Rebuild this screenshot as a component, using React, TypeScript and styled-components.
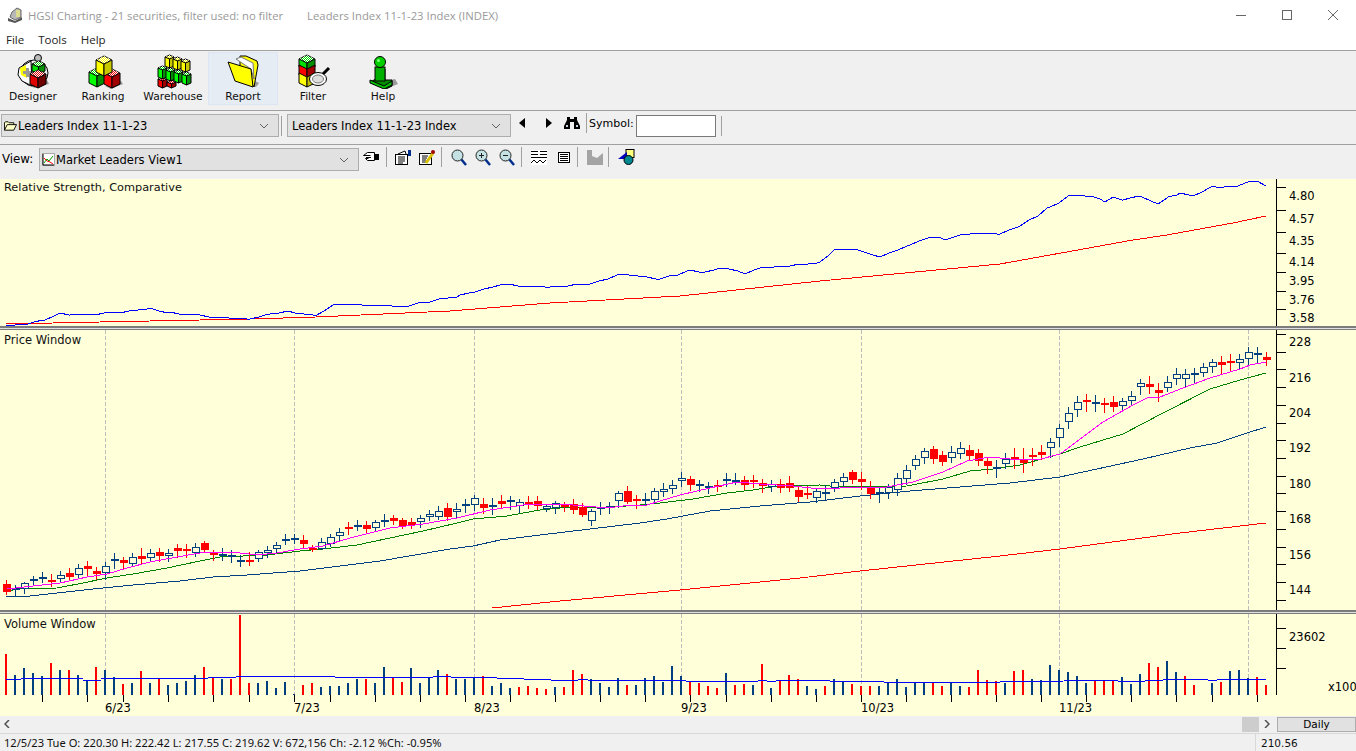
import React from 'react';
import styled, { createGlobalStyle } from 'styled-components';

const GlobalStyle = createGlobalStyle`
  html, body { margin: 0; padding: 0; background: #f0f0f0; overflow: hidden; }
  * { box-sizing: border-box; }
`;

const UI_FONT = `"DejaVu Sans", "Liberation Sans", sans-serif`;
const TITLE_FONT = `"Open Sans", "Noto Sans", sans-serif`;
const STATUS_FONT = `"Noto Sans", "DejaVu Sans", sans-serif`;
const CREAM = '#ffffd9';
const NAVY = '#004080';

type Kind = 'r' | 'h' | 'd';
type Row = [number, number, number, number, Kind];

// candles were read off the chart, values are y offsets at 3x
const toCandles = (y0: number, rows: Row[]) =>
  rows.map(([t, b, hi, lo, k]) => ({
    top: y0 + t / 3,
    bot: y0 + b / 3,
    hi: y0 + hi / 3,
    lo: y0 + lo / 3,
    k,
  }));

const candles = [
  ...toCandles(500, [
    [252, 275, 240, 285, 'r'], [265, 270, 255, 288, 'd'], [250, 268, 245, 282, 'h'], [238, 241, 228, 258, 'd'],
    [231, 236, 216, 250, 'd'], [240, 245, 222, 260, 'r'], [226, 236, 212, 245, 'h'], [219, 231, 205, 245, 'r'],
    [205, 224, 192, 237, 'h'], [198, 206, 183, 228, 'r'], [213, 221, 200, 240, 'r'], [198, 220, 185, 238, 'h'],
    [177, 182, 158, 205, 'd'], [180, 188, 170, 210, 'r'], [172, 191, 158, 198, 'h'], [168, 177, 144, 195, 'r'],
    [160, 173, 148, 187, 'h'], [156, 167, 144, 185, 'r'], [160, 167, 148, 186, 'h'], [144, 153, 131, 172, 'r'],
    [147, 153, 131, 172, 'r'], [142, 160, 128, 170, 'h'], [129, 150, 123, 160, 'r'], [157, 164, 150, 182, 'r'],
    [162, 167, 145, 185, 'd'], [166, 172, 150, 190, 'd'], [181, 186, 165, 200, 'd'], [180, 186, 157, 198, 'r'],
    [157, 176, 150, 187, 'h'], [151, 160, 137, 172, 'h'], [135, 146, 125, 160, 'h'], [118, 122, 102, 134, 'd'],
  ]),
  ...toCandles(460, [
    [235, 238, 222, 252, 'd'], [240, 252, 225, 268, 'r'], [264, 270, 255, 276, 'r'], [247, 268, 235, 272, 'h'],
    [232, 252, 222, 262, 'h'], [217, 227, 205, 243, 'h'], [202, 207, 186, 225, 'r'], [195, 200, 181, 215, 'd'],
    [195, 207, 183, 222, 'r'], [187, 205, 181, 218, 'h'], [180, 185, 163, 203, 'd'], [174, 183, 165, 195, 'r'],
    [180, 198, 174, 208, 'r'], [186, 195, 174, 208, 'r'], [175, 186, 165, 203, 'h'], [163, 170, 151, 183, 'h'],
    [154, 170, 139, 182, 'h'], [144, 171, 129, 183, 'r'], [148, 157, 129, 178, 'h'], [132, 136, 117, 158, 'd'],
    [115, 136, 105, 153, 'h'], [132, 144, 114, 163, 'r'], [135, 139, 114, 165, 'd'], [123, 132, 105, 147, 'r'],
    [121, 127, 108, 151, 'h'], [127, 138, 117, 160, 'h'], [127, 133, 108, 147, 'r'], [123, 137, 108, 150, 'r'],
    [139, 146, 133, 157, 'h'], [130, 144, 124, 162, 'h'], [135, 139, 126, 157, 'r'], [132, 150, 117, 162, 'r'],
    [141, 165, 129, 172, 'r'], [154, 184, 147, 198, 'h'], [141, 146, 127, 166, 'd'], [138, 142, 126, 162, 'd'],
    [100, 124, 94, 144, 'h'], [93, 126, 78, 132, 'r'], [117, 123, 105, 147, 'r'], [117, 123, 99, 135, 'd'],
    [94, 120, 84, 132, 'h'],
  ]),
  ...toCandles(430, [
    [178, 187, 159, 200, 'h'], [166, 176, 150, 192, 'h'], [145, 152, 126, 172, 'h'], [148, 165, 138, 183, 'r'],
    [162, 167, 150, 185, 'd'], [167, 175, 156, 192, 'h'], [165, 172, 150, 186, 'r'], [147, 152, 129, 172, 'd'],
    [150, 153, 129, 165, 'd'], [151, 165, 138, 180, 'r'], [150, 157, 135, 175, 'r'], [160, 167, 147, 189, 'r'],
    [162, 171, 150, 186, 'h'], [162, 173, 147, 189, 'r'], [160, 174, 138, 186, 'r'], [180, 200, 171, 215, 'r'],
    [188, 192, 168, 207, 'r'], [184, 204, 177, 219, 'h'], [186, 191, 165, 210, 'd'], [157, 174, 147, 186, 'h'],
    [142, 155, 129, 168, 'h'], [126, 150, 120, 162, 'r'], [147, 156, 126, 180, 'r'], [172, 192, 153, 207, 'r'],
    [186, 191, 172, 219, 'd'], [171, 189, 162, 207, 'h'], [145, 181, 129, 198, 'h'], [121, 147, 105, 165, 'h'],
    [88, 109, 75, 120, 'h'], [64, 85, 54, 102, 'h'], [57, 87, 48, 102, 'r'], [75, 96, 63, 108, 'r'],
    [67, 85, 48, 99, 'h'], [55, 73, 36, 87, 'h'], [60, 78, 45, 90, 'r'], [69, 93, 57, 108, 'r'],
    [93, 108, 84, 132, 'r'], [111, 116, 90, 144, 'd'], [87, 103, 70, 117, 'h'], [81, 90, 54, 117, 'r'],
    [87, 99, 54, 129, 'r'], [76, 80, 54, 108, 'r'],
  ]),
  ...toCandles(330, [
    [367, 375, 345, 390, 'r'], [335, 355, 325, 385, 'h'], [295, 325, 282, 350, 'h'], [250, 275, 232, 298, 'h'],
    [217, 241, 198, 260, 'h'], [211, 215, 192, 245, 'r'], [216, 219, 196, 248, 'd'], [219, 226, 205, 250, 'r'],
    [217, 230, 199, 248, 'r'], [212, 227, 205, 245, 'h'], [199, 214, 184, 228, 'h'], [160, 172, 148, 195, 'h'],
    [163, 172, 139, 192, 'r'], [181, 188, 160, 218, 'r'], [157, 175, 139, 187, 'h'], [133, 148, 114, 165, 'h'],
    [133, 148, 117, 175, 'h'], [130, 132, 115, 160, 'd'], [112, 130, 100, 142, 'h'], [97, 112, 87, 130, 'h'],
    [97, 106, 78, 133, 'r'], [94, 98, 72, 127, 'r'], [88, 100, 72, 118, 'h'], [65, 88, 52, 105, 'h'],
    [70, 73, 52, 100, 'd'], [81, 89, 66, 107, 'r'],
  ]),
];

const pts = (list: number[][]) => list.map((p) => p.join(',')).join(' ');

// sample a hand-read line once per bar and give it the small daily wobble the real series has
const wobble = (list: number[][], amp: number) => {
  const out: number[][] = [];
  for (let s = 0; s < list.length - 1; s++) {
    const [x0, y0] = list[s];
    const [x1, y1] = list[s + 1];
    for (let x = x0; x < x1; x += 9) {
      const y = y0 + ((y1 - y0) * (x - x0)) / (x1 - x0);
      out.push([x, Math.round(y + amp * Math.sin(x * 0.41) * Math.cos(x * 0.13))]);
    }
  }
  out.push(list[list.length - 1]);
  return pts(out);
};

const MAGENTA_LINE = pts([[7,589],[33,586],[60,583],[87,577],[107,574],[127,568],[150,562],[177,557],[200,553],[213,552],[240,553],[257,555],[277,553],[300,549],[323,546],[350,538],[390,528],[423,524],[457,518],[490,510],[530,504],[557,504],[573,505],[607,508],[623,506],[647,505],[660,501],[680,495],[710,488],[737,482],[760,484],[793,486],[820,489],[860,487],[887,487],[913,482],[943,472],[967,461],[990,457],[1010,459],[1037,460],[1060,454],[1083,437],[1103,422],[1133,405],[1147,398],[1160,397],[1183,388],[1210,378],[1240,369],[1250,365],[1266,362]]);
const GREEN_LINE = pts([[6,591],[20,589],[57,588],[83,583],[107,578],[133,574],[167,568],[200,561],[220,557],[267,555],[300,551],[323,549],[357,545],[390,538],[423,531],[457,523],[473,519],[507,516],[540,510],[570,507],[613,507],[640,505],[660,503],[693,499],[727,493],[753,490],[777,486],[820,485],[840,487],[907,486],[943,479],[970,471],[993,469],[1020,465],[1060,454],[1080,447],[1123,434],[1163,413],[1210,389],[1240,380],[1266,373]]);
const NAVY_LINE = pts([[6,596],[30,596],[57,593],[93,589],[133,585],[180,581],[213,577],[247,575],[300,571],[380,561],[450,549],[473,546],[500,540],[540,535],[590,529],[640,523],[667,519],[710,511],[760,506],[810,502],[860,496],[910,491],[960,487],[1010,483],[1060,477],[1143,459],[1190,448],[1217,443],[1247,433],[1266,427]]);
const LONG_RED_LINE = pts([[492,608],[560,601],[680,590],[800,578],[860,571],[1000,556],[1060,549],[1180,533],[1266,523]]);
const RS_BLUE = wobble([[6,325],[25,324],[45,320],[60,313],[70,315],[95,314],[120,312],[150,309],[170,313],[200,315],[220,318],[250,319],[270,313],[295,312],[315,316],[335,305],[365,304],[400,307],[430,302],[460,295],[475,292],[500,285],[550,287],[590,284],[620,274],[660,279],[690,270],[705,272],[720,268],[745,273],[765,267],[790,266],[820,262],[835,249],[855,249],[880,257],[910,245],[930,237],[945,239],[970,233],[1000,234],[1020,226],[1050,207],[1070,196],[1085,195],[1100,199],[1105,202],[1113,198],[1123,200],[1130,197],[1142,197],[1158,204],[1168,197],[1180,193],[1193,196],[1212,186],[1220,188],[1240,185],[1248,182],[1257,181],[1266,186]], 1);
const RS_RED = pts([[6,324],[100,322],[250,319],[316,317],[450,311],[550,303],[680,296],[820,281],[1000,264],[1050,255],[1100,246],[1133,240],[1167,235],[1200,229],[1233,223],[1266,216]]);

// height above the baseline, R = red, B = blue
const VOLUME = 'R41 B20 B27 B22 B19 R32 B25 R25 B20 B15 R28 B25 B18 R11 B12 R24 B12 R17 B10 B12 B14 B20 R28 R18 B16 R16 R80 R12 B12 B14 B7 B13 B1 R10 R12 B8 B9 B9 B12 B16 R16 B12 B28 R17 R13 B27 B12 B17 B25 R21 B16 B16 B18 R19 B9 B12 B7 R8 R9 R7 R6 B8 R8 R25 R21 B16 B12 B8 B17 R10 B10 B17 B19 B13 B29 B19 R14 R12 R9 R7 B22 R10 R11 B10 R31 B7 R14 R20 R16 B9 B6 R9 B16 B14 R11 R9 R9 B9 B12 B16 B8 B12 B12 R13 R9 B13 B9 R8 R25 R15 R14 B12 R24 R25 B16 B15 B30 B25 B23 B19 B12 R14 R14 R14 B18 B11 B21 R32 R28 B34 B23 R19 R10 B0 B12 R13 B24 B25 B17 R18 R10'
  .split(' ')
  .map((v) => ({ red: v[0] === 'R', h: Number(v.slice(1)) }));

const VOL_AVG: [number, number, number][] = [
  [6,21,679],[21,83,678],[83,101,680],[101,208,678],[208,236,677],[236,335,676],[335,433,677],[433,451,676],[451,497,677],[497,524,678],[524,551,679],[551,578,680],[578,588,679],[588,686,680],[686,758,681],[758,767,680],[767,776,681],[776,830,680],[830,884,681],[884,1000,682],[1000,1063,681],[1064,1118,680],[1118,1145,681],[1145,1163,680],[1163,1208,679],[1208,1217,680],[1217,1266,679],
];

const GRIDLINES = [105, 294, 474, 681, 861, 1059, 1248];
const MONTHS: [number, string][] = [[105,'6/23'],[294,'7/23'],[474,'8/23'],[681,'9/23'],[861,'10/23'],[1059,'11/23']];
const VOL_TICKS = [42,87,123,168,213,249,294,330,375,420,465,510,555,600,645,690,726,771,816,861,906,951,996,1041,1086,1131,1176,1212,1257];
const RS_AXIS: [number, string][] = [[187,'4.80'],[210,'4.57'],[232,'4.35'],[253,'4.14'],[272,'3.95'],[291,'3.76'],[309,'3.58']];
const PRICE_LABELS: [number, string][] = [[334,'228'],[370,'216'],[405,'204'],[440,'192'],[476,'180'],[511,'168'],[547,'156'],[582,'144']];
const PRICE_TICKS = Array.from({ length: 16 }, (_, i) => Math.round(334 + i * 17.72));

const Page = styled.div`
  width: 1356px;
  height: 751px;
  display: flex;
  flex-direction: column;
  background: #f0f0f0;
  overflow: hidden;
  font-family: ${UI_FONT};
  font-size: 11px;
  color: #000;
`;

const TitleBar = styled.div`
  height: 30px;
  display: flex;
  align-items: center;
  background: #fff;
  padding-left: 7px;
  flex: none;
`;

const TitleText = styled.span<{ $ml: number }>`
  margin-left: ${(p) => p.$ml}px;
  font-family: ${TITLE_FONT};
  font-size: 11.3px;
  color: #999;
  white-space: nowrap;
`;

const WindowControls = styled.div`
  margin-left: auto;
  display: flex;
`;

const WindowButton = styled.div`
  width: 46px;
  height: 30px;
  display: flex;
  align-items: center;
  justify-content: center;
`;

const MenuBar = styled.div`
  height: 21px;
  flex: none;
  display: flex;
  gap: 14px;
  padding-left: 6px;
  align-items: center;
  background: #fff;
  border-bottom: 1px solid #a0a0a0;
  padding-bottom: 2px;
`;

const MenuItem = styled.span`
  font-family: ${TITLE_FONT};
  font-size: 11.5px;
  color: #222;
`;

const ToolBar = styled.div`
  height: 60px;
  flex: none;
  display: flex;
  margin-left: -2px;
  padding-top: 1px;
  border-bottom: 1px solid #a0a0a0;
`;

const ToolButton = styled.div<{ $active?: boolean }>`
  width: 70px;
  height: 53px;
  display: flex;
  flex-direction: column;
  align-items: center;
  background: ${(p) => (p.$active ? '#e6ecf3' : 'transparent')};
  border: 1px solid ${(p) => (p.$active ? '#dbe6f2' : 'transparent')};
`;

const ToolLabel = styled.span`
  font-size: 10.7px;
  line-height: 13px;
  margin-top: 1px;
  color: #111;
`;

const ComboRow = styled.div`
  height: 34px;
  flex: none;
  display: flex;
  align-items: center;
  border-bottom: 1px solid #a0a0a0;
  padding: 0 0 4px 1px;
`;

const ViewRow = styled.div`
  height: 34px;
  flex: none;
  display: flex;
  align-items: center;
  padding-bottom: 5px;
`;

const Combo = styled.div<{ $w: number; $ml?: number }>`
  width: ${(p) => p.$w}px;
  height: 23px;
  margin-left: ${(p) => p.$ml ?? 0}px;
  display: flex;
  align-items: center;
  gap: 1px;
  padding: 0 6px 0 2px;
  background: #e1e1e1;
  border: 1px solid #adadad;
  font-size: 11.5px;
  white-space: nowrap;
`;

const ComboText = styled.span<{ $pl?: number }>`
  padding-left: ${(p) => p.$pl ?? 0}px;
  flex: 1;
`;

const VSep = styled.div<{ $ml: number }>`
  width: 1px;
  height: 20px;
  background: #a0a0a0;
  margin-left: ${(p) => p.$ml}px;
  flex: none;
`;

const RowLabel = styled.span<{ $ml: number }>`
  margin-left: ${(p) => p.$ml}px;
  font-size: 11px;
  white-space: nowrap;
`;

const ViewLabel = styled(RowLabel)`
  width: 37px;
  flex: none;
  margin-bottom: 2px;
  font-size: 11.8px;
`;

// buttons on these bars sit a little above the combo boxes
const IconStrip = styled.div`
  display: flex;
  align-items: center;
  flex: none;
  margin-bottom: 5px;
`;

const SymbolInput = styled.div`
  width: 80px;
  height: 22px;
  margin-left: 2px;
  background: #fff;
  border: 1px solid #7a7a7a;
  flex: none;
`;

const Icon = styled.svg<{ $ml?: number }>`
  display: block;
  flex: none;
  margin-left: ${(p) => p.$ml ?? 0}px;
`;

const ChartArea = styled.div`
  flex: none;
  display: flex;
  flex-direction: column;
  background: ${CREAM};
`;

const Panel = styled.div<{ $h: number }>`
  position: relative;
  height: ${(p) => p.$h}px;
  flex: none;
`;

const PanelTitle = styled.span<{ $top?: number; $size?: number }>`
  position: absolute;
  left: 4px;
  top: ${(p) => p.$top ?? 3}px;
  font-size: ${(p) => p.$size ?? 11.5}px;
  color: #111;
`;

const PanelSvg = styled.svg`
  display: block;
  width: 1356px;
  height: 100%;
`;

const AxisText = styled.text`
  font-family: ${UI_FONT};
  font-size: 11.5px;
  fill: #000;
`;

const Splitter = styled.div`
  height: 4px;
  flex: none;
  background: #e0e0e0;
  border-top: 2px solid #7c7c7c;
  border-bottom: 1px solid #7c7c7c;
`;

const ScrollRow = styled.div`
  height: 16px;
  flex: none;
  display: flex;
  align-items: center;
  background: #f0f0f0;
`;

const ScrollTrack = styled.div`
  width: 1276px;
  height: 16px;
  display: flex;
  align-items: center;
  padding: 0 6px 0 4px;
`;

const ScrollThumb = styled.div`
  width: 17px;
  height: 15px;
  margin-left: auto;
  margin-right: 5px;
  background: #cdcdcd;
`;

const DailyButton = styled.div`
  width: 79px;
  height: 15px;
  margin-left: 1px;
  background: #e1e1e1;
  border: 1px solid #adadad;
  font-size: 10.5px;
  line-height: 13px;
  text-align: center;
`;

const StatusBar = styled.div`
  flex: 1;
  display: flex;
  align-items: center;
  margin-top: 1px;
  border-top: 1px solid #d8d8d8;
  padding-left: 4px;
  white-space: nowrap;
  font-family: ${STATUS_FONT};
  font-size: 11.13px;
  color: #111;
`;

const StatusCell = styled.div`
  margin-left: auto;
  width: 101px;
  height: 100%;
  display: flex;
  align-items: center;
  padding-left: 5px;
  border-left: 1px solid #d8d8d8;
  font-family: ${UI_FONT};
  font-size: 10.5px;
`;

const Cube = ({ x, y, w = 16, h = 18, c, d, id }: { x: number; y: number; w?: number; h?: number; c: string; d: string; id: string }) => {
  const m = w / 2;
  const t = Math.round(w / 4);
  return (
    <g transform={`translate(${x} ${y})`} stroke="#000" strokeWidth="1">
      <polygon points={`0,${t} ${m},0 ${w},${t} ${m},${t * 2}`} fill={c} />
      <polygon points={`0,${t} ${m},${t * 2} ${w},${t} ${m},0`} fill={`url(#${id})`} stroke="none" />
      <polygon points={`0,${t} ${m},${t * 2} ${m},${h} 0,${h - t}`} fill={c} />
      <polygon points={`${w},${t} ${m},${t * 2} ${m},${h} ${w},${h - t}`} fill={d} />
    </g>
  );
};

const Dither = ({ id }: { id: string }) => (
  <defs>
    <pattern id={id} width="2" height="2" patternUnits="userSpaceOnUse">
      <rect width="1" height="1" fill="#fff" />
      <rect x="1" y="1" width="1" height="1" fill="#fff" />
    </pattern>
  </defs>
);

const BigIcon = ({ children }: { children: React.ReactNode }) => (
  <Icon width="40" height="36" viewBox="0 0 40 36">
    {children}
  </Icon>
);

const DesignerIcon = () => (
  <BigIcon>
    <Dither id="d-dg" />
    <polygon points="14,32 34,27 36,31 22,35" fill="#9a9a9a" />
    <ellipse cx="21" cy="20" rx="14" ry="13" fill="none" stroke="#000" />
    <polygon points="6,15 18,8 19,33 9,28 5,22" fill="#fff" stroke="#000" />
    <polygon points="7,15 13,12 14,25 8,22" fill="#ffff00" />
    <rect x="13" y="15" width="3" height="9" fill="#999" />
    <rect x="10" y="18" width="8" height="3" fill="#999" />
    <circle cx="25" cy="5" r="3.5" fill="#bdbdbd" stroke="#000" />
    <Cube x={19} y={8} w={13} h={13} c="#00e000" d="#009000" id="d-dg" />
    <Cube x={17} y={17} w={16} h={18} c="#e00000" d="#700000" id="d-dg" />
  </BigIcon>
);

const RankingIcon = () => (
  <BigIcon>
    <Dither id="d-rk" />
    <polygon points="22,33 38,28 40,31 28,36" fill="#999" />
    <Cube x={6} y={15} w={16} h={19} c="#00ff00" d="#009000" id="d-rk" />
    <Cube x={21} y={16} w={16} h={19} c="#ff0000" d="#a00000" id="d-rk" />
    <Cube x={13} y={3} w={16} h={20} c="#ffff00" d="#c8c800" id="d-rk" />
  </BigIcon>
);

const WarehouseIcon = () => (
  <BigIcon>
    <Dither id="d-wh" />
    <Cube x={5} y={24} w={9} h={11} c="#ff0000" d="#a00000" id="d-wh" />
    <Cube x={14} y={27} w={9} h={8} c="#ff0000" d="#a00000" id="d-wh" />
    <Cube x={12} y={2} w={9} h={13} c="#ffff00" d="#c8c800" id="d-wh" />
    <Cube x={20} y={4} w={9} h={13} c="#ffff00" d="#c8c800" id="d-wh" />
    <Cube x={28} y={6} w={9} h={13} c="#ffff00" d="#c8c800" id="d-wh" />
    <Cube x={5} y={13} w={9} h={13} c="#00ff00" d="#009000" id="d-wh" />
    <Cube x={13} y={15} w={9} h={13} c="#00ff00" d="#009000" id="d-wh" />
    <Cube x={21} y={17} w={9} h={13} c="#00ff00" d="#009000" id="d-wh" />
    <Cube x={29} y={19} w={9} h={13} c="#00ff00" d="#009000" id="d-wh" />
  </BigIcon>
);

const ReportIcon = () => (
  <BigIcon>
    <polygon points="30,27 36,30 33,34 30,33" fill="#9a9a9a" />
    <polygon points="17,3 23,3 34,8 35,12 31,34 17,14" fill="#ffff00" stroke="#000" />
    <polygon points="13,6 18,4 30,10 31,26 28,16" fill="#fff" stroke="#777" />
    <polygon points="5,9 28,16 30,34 12,28" fill="#ffff00" stroke="#000" />
  </BigIcon>
);

const FilterIcon = () => (
  <BigIcon>
    <Dither id="d-fl" />
    <Cube x={6} y={2} w={16} h={16} c="#00e000" d="#009000" id="d-fl" />
    <polygon points="6,12 14,16 14,26 6,22" fill="#ff0000" stroke="#000" />
    <polygon points="22,12 14,16 14,26 22,22" fill="#a00000" stroke="#000" />
    <polygon points="6,20 14,24 14,34 6,30" fill="#ffff00" stroke="#000" />
    <polygon points="22,20 14,24 14,34 22,30" fill="#c0c000" stroke="#000" />
    <line x1="30" y1="21" x2="36" y2="15" stroke="#000" strokeWidth="3" />
    <ellipse cx="25" cy="26" rx="8.5" ry="6.5" fill="#fff" stroke="#000" />
    <ellipse cx="25" cy="26" rx="5.5" ry="4" fill="#ddd" stroke="#777" />
  </BigIcon>
);

const HelpIcon = () => (
  <BigIcon>
    <polygon points="23,28 32,26 35,31 25,35" fill="#9a9a9a" />
    <g transform="translate(-3 0)">
      <polygon points="16,16 25,16 25,27 32,27 32,33 26,36 10,29 16,26" fill="#008a00" stroke="#000" />
      <rect x="15" y="14" width="10" height="14" fill="#00b000" stroke="#000" />
      <polygon points="10,27 24,33 32,28 32,32 24,36 10,30" fill="#00c000" stroke="#000" />
      <circle cx="20" cy="9" r="5.5" fill="#00d000" stroke="#000" />
      <circle cx="18.5" cy="7.5" r="1.5" fill="#7cff7c" />
    </g>
  </BigIcon>
);

const Chevron = () => (
  <Icon width="16" height="16" viewBox="0 0 16 16">
    <path d="M4 6l4 4 4-4" fill="none" stroke="#606060" strokeWidth="1" />
  </Icon>
);

const Magnifier = ({ ml, mark }: { ml: number; mark?: '+' | '-' }) => (
  <Icon $ml={ml} width="16" height="17" viewBox="0 0 16 17">
    <line x1="10" y1="10" x2="15" y2="16" stroke="#00308c" strokeWidth="2.5" />
    <circle cx="6.5" cy="6.5" r="5.5" fill="#c4e2e4" stroke="#222" />
    {mark && <line x1="4" y1="6.5" x2="9" y2="6.5" stroke="#222" />}
    {mark === '+' && <line x1="6.5" y1="4" x2="6.5" y2="9" stroke="#222" />}
  </Icon>
);

const ChartMini = () => (
  <Icon width="13" height="13" viewBox="0 0 13 13">
    <rect x="0.5" y="0.5" width="12" height="12" fill="#fff" stroke="#aaa" />
    <path d="M1 1v11h11" fill="none" stroke="#000" />
    <path d="M2 10l3-4 2 2 4-5" fill="none" stroke="#00a000" />
    <path d="M2 5l3 3 3 1 3 2" fill="none" stroke="#ff0000" />
  </Icon>
);

const RsPanel = () => (
  <Panel $h={147}>
    <PanelSvg viewBox="0 179 1356 147" shapeRendering="crispEdges">
      <polyline points={RS_RED} fill="none" stroke="#ff0000" />
      <polyline points={RS_BLUE} fill="none" stroke="#0000ff" />
      <rect x="1276" y="179" width="1" height="147" fill="#000" />
      {RS_AXIS.map(([y, label]) => (
        <React.Fragment key={label}>
          <rect x="1276" y={y} width="10" height="1" fill="#000" />
          <AxisText x="1289" y={y + 12.5}>{label}</AxisText>
        </React.Fragment>
      ))}
    </PanelSvg>
    <PanelTitle $top={2} $size={11.3}>Relative Strength, Comparative</PanelTitle>
  </Panel>
);

const PricePanel = () => (
  <Panel $h={280}>
    <PanelSvg viewBox="0 330 1356 280" shapeRendering="crispEdges">
      {GRIDLINES.map((x) => (
        <line key={x} x1={x + 0.5} x2={x + 0.5} y1="330" y2="610" stroke="#bdbdbd" strokeDasharray="4 2" />
      ))}
      <polyline points={LONG_RED_LINE} fill="none" stroke="#ff0000" />
      <polyline points={NAVY_LINE} fill="none" stroke={NAVY} />
      <polyline points={GREEN_LINE} fill="none" stroke="#008000" />
      {candles.map((c, i) => {
        const x = 6 + 9 * i;
        const color = c.k === 'r' ? '#ff0000' : NAVY;
        const top = Math.round(c.top);
        const bot = Math.max(Math.round(c.bot), top + 2);
        return (
          <g key={i}>
            <rect x={x} y={Math.round(c.hi)} width="1" height={Math.round(c.lo - c.hi)} fill={color} />
            {c.k === 'h' ? (
              <rect x={x - 3 + 0.5} y={top + 0.5} width="7" height={bot - top - 1} fill={CREAM} stroke={color} />
            ) : (
              <rect x={x - 3} y={top} width="8" height={bot - top} fill={color} />
            )}
          </g>
        );
      })}
      <polyline points={MAGENTA_LINE} fill="none" stroke="#ff00ff" />
      <rect x="1276" y="330" width="1" height="280" fill="#000" />
      {PRICE_TICKS.map((y) => (
        <rect key={y} x="1276" y={y} width="10" height="1" fill="#000" />
      ))}
      {PRICE_LABELS.map(([y, label]) => (
        <AxisText key={label} x="1289" y={y + 12}>{label}</AxisText>
      ))}
    </PanelSvg>
    <PanelTitle>Price Window</PanelTitle>
  </Panel>
);

const VolumePanel = () => (
  <Panel $h={102}>
    <PanelSvg viewBox="0 614 1356 102" shapeRendering="crispEdges">
      {GRIDLINES.map((x) => (
        <line key={x} x1={x + 0.5} x2={x + 0.5} y1="614" y2="695" stroke="#bdbdbd" strokeDasharray="4 2" />
      ))}
      {VOLUME.map((v, i) => (
        <rect key={i} x={5 + 9 * i} y={695 - v.h} width="2" height={v.h} fill={v.red ? '#ff0000' : NAVY} />
      ))}
      {VOL_AVG.map(([a, b, y]) => (
        <rect key={a} x={a} y={y} width={b - a} height="1" fill="#0000ff" />
      ))}
      {VOL_TICKS.map((x) => (
        <rect key={x} x={x} y="695" width="1" height="7" fill="#000" />
      ))}
      {MONTHS.map(([x, label]) => (
        <AxisText key={label} x={x} y="712">{label}</AxisText>
      ))}
      <rect x="1276" y="614" width="1" height="81" fill="#000" />
      {[628, 648, 668].map((y) => (
        <rect key={y} x="1276" y={y} width="10" height="1" fill="#000" />
      ))}
      <AxisText x="1289" y="641">23602</AxisText>
      <AxisText x="1328" y="691">x100</AxisText>
    </PanelSvg>
    <PanelTitle>Volume Window</PanelTitle>
  </Panel>
);

export default function App() {
  return (
    <Page>
      <GlobalStyle />
      <TitleBar>
        <Icon width="16" height="16" viewBox="0 0 16 16">
          <polygon points="1,11 8,14 15,10 15,13 8,16 1,14" fill="#555" />
          <polygon points="5,5 10,1 14,3 14,10 8,13 3,10" fill="#b8b8b8" stroke="#666" />
          <rect x="9" y="3" width="4" height="7" fill="#dcdc90" />
        </Icon>
        <TitleText $ml={5}>HGSI Charting - 21 securities, filter used: no filter</TitleText>
        <TitleText $ml={24}>Leaders Index 11-1-23 Index (INDEX)</TitleText>
        <WindowControls>
          <WindowButton>
            <Icon width="10" height="10" viewBox="0 0 10 10" shapeRendering="crispEdges">
              <rect y="5" width="10" height="1" fill="#666" />
            </Icon>
          </WindowButton>
          <WindowButton>
            <Icon width="10" height="10" viewBox="0 0 10 10" shapeRendering="crispEdges">
              <rect x="0.5" y="0.5" width="9" height="9" fill="none" stroke="#666" />
            </Icon>
          </WindowButton>
          <WindowButton>
            <Icon width="10" height="10" viewBox="0 0 10 10">
              <path d="M0 0l10 10M10 0L0 10" stroke="#666" />
            </Icon>
          </WindowButton>
        </WindowControls>
      </TitleBar>

      <MenuBar>
        <MenuItem>File</MenuItem>
        <MenuItem>Tools</MenuItem>
        <MenuItem>Help</MenuItem>
      </MenuBar>

      <ToolBar>
        <ToolButton><DesignerIcon /><ToolLabel>Designer</ToolLabel></ToolButton>
        <ToolButton><RankingIcon /><ToolLabel>Ranking</ToolLabel></ToolButton>
        <ToolButton><WarehouseIcon /><ToolLabel>Warehouse</ToolLabel></ToolButton>
        <ToolButton $active><ReportIcon /><ToolLabel>Report</ToolLabel></ToolButton>
        <ToolButton><FilterIcon /><ToolLabel>Filter</ToolLabel></ToolButton>
        <ToolButton><HelpIcon /><ToolLabel>Help</ToolLabel></ToolButton>
      </ToolBar>

      <ComboRow>
        <Combo $w={278}>
          <Icon width="13" height="12" viewBox="0 0 14 12">
            <path d="M0.5 10.5V2.5l1-1h3l1 1h5v2M0.5 10.5l3-6h10l-3 6z" fill="#ffffc8" stroke="#000" />
          </Icon>
          <ComboText>Leaders Index 11-1-23</ComboText>
          <Chevron />
        </Combo>
        <VSep $ml={2} />
        <Combo $w={224} $ml={5}>
          <ComboText $pl={2}>Leaders Index 11-1-23 Index</ComboText>
          <Chevron />
        </Combo>
        <IconStrip>
          <Icon $ml={8} width="6" height="10" viewBox="0 0 6 10"><polygon points="6,0 6,10 0,5" fill="#000" /></Icon>
          <Icon $ml={21} width="6" height="10" viewBox="0 0 6 10"><polygon points="0,0 0,10 6,5" fill="#000" /></Icon>
          <Icon $ml={12} width="16" height="14" viewBox="0 0 16 14">
            <path d="M3 1h3v2h4V1h3v3l3 6v3H10V6H6v7H0v-3l3-6z" fill="#000" />
            <rect x="2" y="9" width="2" height="2" fill="#bcd0e0" />
            <rect x="12" y="9" width="2" height="2" fill="#bcd0e0" />
          </Icon>
          <VSep $ml={6} />
          <RowLabel $ml={2}>Symbol:</RowLabel>
        </IconStrip>
        <SymbolInput />
        <VSep $ml={5} />
      </ComboRow>

      <ViewRow>
        <ViewLabel $ml={2}>View:</ViewLabel>
        <Combo $w={320}>
          <ChartMini />
          <ComboText>Market Leaders View1</ComboText>
          <Chevron />
        </Combo>
        <IconStrip>
          <Icon $ml={4} width="17" height="10" viewBox="0 0 17 10">
            <path d="M0.5 3.5l4-3h7v8h-7l-2-2h3M0.5 3.5h7M3 5.5h5" fill="#fff" stroke="#000" />
            <rect x="12" y="2" width="4" height="6" fill="#000" />
          </Icon>
          <VSep $ml={6} />
          <Icon $ml={8} width="17" height="15" viewBox="0 0 17 15">
            <rect x="0.5" y="4.5" width="12" height="10" fill="#fff" stroke="#000" />
            <path d="M3 7h7M3 9h7M3 11h7M3 13h5" stroke="#000" />
            <path d="M3 4l7-3 1 3" fill="#fff" stroke="#000" />
            <rect x="13" y="0" width="3" height="6" fill="#00308c" />
          </Icon>
          <Icon $ml={7} width="16" height="15" viewBox="0 0 16 15">
            <rect x="0.5" y="3.5" width="12" height="11" fill="#fff" stroke="#000" />
            <path d="M3 6h6M3 8h5M3 10h4M3 12h4" stroke="#000" />
            <line x1="7" y1="13" x2="14" y2="3" stroke="#d8c000" strokeWidth="3" />
            <circle cx="14" cy="2" r="2" fill="#a00000" />
          </Icon>
          <VSep $ml={6} />
          <Magnifier ml={9} />
          <Magnifier ml={8} mark="+" />
          <Magnifier ml={8} mark="-" />
          <VSep $ml={6} />
          <Icon $ml={9} width="16" height="15" viewBox="0 0 16 15" shapeRendering="crispEdges">
            <rect width="16" height="15" fill="#fff" />
            <path d="M0 1.5h7M9 1.5h7M0 4.5h7M9 4.5h7M0 7.5h16" stroke="#000" />
            <path d="M0 13l3-3 3 3 3-3 3 3 3-3" fill="none" stroke="#000" />
          </Icon>
          <Icon $ml={11} width="12" height="11" viewBox="0 0 12 11" shapeRendering="crispEdges">
            <rect x="0.5" y="0.5" width="11" height="10" fill="#fff" stroke="#000" />
            <path d="M2 2.5h8M2 4.5h8M2 6.5h8M2 8.5h8" stroke="#000" />
          </Icon>
          <VSep $ml={7} />
          <Icon $ml={9} width="16" height="15" viewBox="0 0 16 15">
            <polygon points="0,0 5,0 5,6 10,8 16,3 16,15 0,15" fill="#a4a4a4" />
          </Icon>
          <VSep $ml={5} />
          <Icon $ml={9} width="17" height="16" viewBox="0 0 17 16">
            <rect x="8" y="0.5" width="8" height="8" fill="#ffff80" stroke="#000" />
            <polygon points="0,10 9,3 9,10" fill="#0000c0" />
            <circle cx="10.5" cy="11" r="4.5" fill="#008890" stroke="#000" />
          </Icon>
        </IconStrip>
      </ViewRow>

      <ChartArea>
        <RsPanel />
        <Splitter />
        <PricePanel />
        <Splitter />
        <VolumePanel />
      </ChartArea>

      <ScrollRow>
        <ScrollTrack>
          <Icon width="6" height="8" viewBox="0 0 6 8">
            <path d="M5 0L1 4l4 4" fill="none" stroke="#505050" strokeWidth="1.5" />
          </Icon>
          <ScrollThumb />
          <Icon width="6" height="8" viewBox="0 0 6 8">
            <path d="M1 0l4 4-4 4" fill="none" stroke="#505050" strokeWidth="1.5" />
          </Icon>
        </ScrollTrack>
        <DailyButton>Daily</DailyButton>
      </ScrollRow>

      <StatusBar>
        12/5/23 Tue O: 220.30 H: 222.42 L: 217.55 C: 219.62 V: 672,156 Ch: -2.12 %Ch: -0.95%
        <StatusCell>210.56</StatusCell>
      </StatusBar>
    </Page>
  );
}
